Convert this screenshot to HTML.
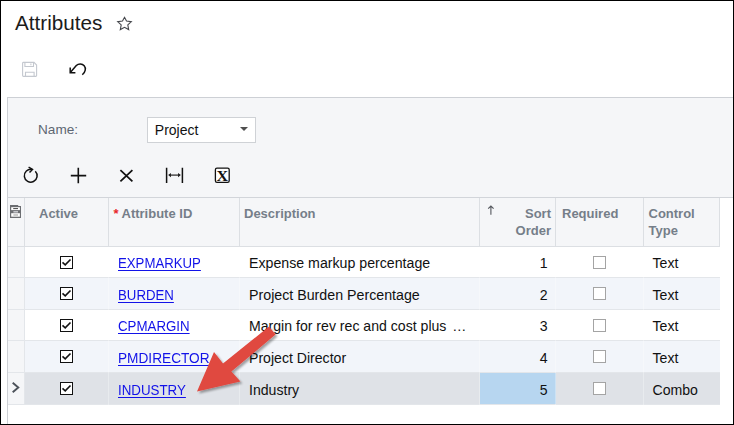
<!DOCTYPE html>
<html><head><meta charset="utf-8"><title>Attributes</title>
<style>
html,body{margin:0;padding:0}
body{width:734px;height:425px;position:relative;overflow:hidden;background:#fff;font-family:"Liberation Sans",Arial,sans-serif;color:#111}
.abs{position:absolute}
#frame{left:0;top:0;width:732px;height:423px;border:1px solid #000;z-index:50;pointer-events:none}
#title{left:15px;top:10.8px;font-size:20.7px;line-height:24px;color:#1b1b1b;white-space:nowrap}
#panel{left:7px;top:97px;width:730px;height:101px;background:#f5f6f8;border:1px solid #cdd0d5;box-sizing:border-box}
#gridwrap{left:7px;top:197px;width:730px;height:240px;background:#fff;border-left:1px solid #cdd0d5;border-top:1px solid #d2d5da;box-sizing:border-box}
#lbl{left:38px;top:122.3px;font-size:13.6px;line-height:16px;color:#5d6672}
#dd{left:147px;top:117px;width:109px;height:26px;box-sizing:border-box;border:1px solid #cfd2d6;background:#fff}
#dd span{position:absolute;left:6.8px;top:4px;font-size:14px;line-height:16px;color:#111}
#dd i{position:absolute;left:91.700px;top:8.900px;width:0;height:0;border-left:4.200px solid transparent;border-right:4.200px solid transparent;border-top:4.400px solid #4f4f4f}
.hd{position:absolute;top:198px;height:49px;background:#f5f6f8;border-right:1px solid #dcdfe3;border-bottom:1px solid #dcdfe3;box-sizing:border-box;font-weight:bold;font-size:13px;line-height:17px;color:#757e89}
.hd span{position:absolute;top:6.700px;white-space:nowrap}
.row{position:absolute;left:8px;width:712px;height:32px;box-sizing:border-box;border-bottom:1px solid #e3e6ea;font-size:14.1px;line-height:16px}
.row.alt{background:#f2f5fa}
.row.sel{background:#dfe2e7}
.row .s{position:absolute;left:0;top:0;width:17px;height:100%;background:#f5f6f8;border-right:1px solid #e3e6ea;box-sizing:border-box}
.row span{position:absolute;top:8.600px;white-space:nowrap}
.row a{position:absolute;top:8.600px;left:110px;font-size:14px;line-height:16px;color:#1212e8;text-decoration:underline;text-underline-offset:1.500px;text-decoration-thickness:1px;white-space:nowrap;transform:scaleX(.944);transform-origin:0 0}
.cb{position:absolute;left:52px;top:9px;width:13px;height:13px;box-sizing:border-box;border:1px solid #111;background:#fff}
.cb2{position:absolute;left:585px;top:9px;width:13px;height:13px;box-sizing:border-box;border:1px solid #a4a4a4;background:#fff}
.r1 .cb,.r1 .cb2{top:9px}
.r1 span,.r1 a{top:7.600px}
.r3 span,.r3 a{top:7.700px}
.vl{position:absolute;top:247px;width:1px;height:158px;background:rgba(255,255,255,.3)}
</style></head><body>
<div class="abs" id="title">Attributes</div>
<svg class="abs" style="left:116px;top:15px" width="17" height="16" viewBox="0 0 17 16"><path d="M8.500 2.300L10.500 6 15.300 6.600 11.800 9.900 12.700 14.600 8.500 12.300 4.300 14.600 5.200 9.900 1.700 6.600 6.500 6z" fill="none" stroke="#45474c" stroke-width="1.1" stroke-linejoin="miter"/></svg>
<!-- save -->
<svg class="abs" style="left:21px;top:60px" width="18" height="19" viewBox="21 60 18 19"><path d="M23.400 62.400H34L36.600 65V75.600a.8.8 0 0 1-.8.8H23.400a.8.8 0 0 1-.8-.8V63.200a.8.8 0 0 1 .8-.8z M24.900 62.400V66.500H33.500V62.400 M30.900 63.400V65.300 M25.500 76.400V72.300H34.100V76.400" fill="none" stroke="#c4c8cf" stroke-width="1.100"/></svg>
<!-- undo -->
<svg class="abs" style="left:67px;top:60px" width="21" height="19" viewBox="67 60 21 19"><path d="M70.500 72.300L76.300 65.600C78.500 63.300 82.200 63.300 84.200 65.700C86.200 68.100 85.600 71.900 82.300 74.800" fill="none" stroke="#111" stroke-width="1.500"/><path d="M70.200 67.500V72.700H75.400" fill="none" stroke="#111" stroke-width="1.500"/></svg>
<div class="abs" id="panel"></div>
<div class="abs" id="lbl">Name:</div>
<div class="abs" id="dd"><span>Project</span><i></i></div>
<!-- grid toolbar icons -->
<svg class="abs" style="left:22px;top:164px" width="18" height="21" viewBox="22 164 18 21"><path d="M35.3 171.3A6.400 6.400 0 1 1 32 169.500" fill="none" stroke="#111" stroke-width="1.5"/><path d="M28.600 167.100L32.500 169.400 29.500 172.500" fill="none" stroke="#111" stroke-width="1.5"/></svg>
<svg class="abs" style="left:70px;top:166px" width="18" height="19" viewBox="70 166 18 19"><path d="M78.300 167.800V183.200M70.800 175.600H86.200" fill="none" stroke="#111" stroke-width="1.6"/></svg>
<svg class="abs" style="left:118px;top:167px" width="17" height="17" viewBox="118 167 17 17"><path d="M120.400 170.100L132.400 181.300M132.400 170.100L120.400 181.300" fill="none" stroke="#111" stroke-width="1.750"/></svg>
<svg class="abs" style="left:164px;top:166px" width="21" height="19" viewBox="164 166 21 19"><path d="M166.600 167.800V183M182.400 167.800V183" fill="none" stroke="#111" stroke-width="1.500"/><path d="M169.500 175.100H179.500" fill="none" stroke="#333" stroke-width="1.300"/><path d="M168.100 175.100L171 172.900V177.300zM180.900 175.100L178 172.900V177.300z" fill="#222"/></svg>
<svg class="abs" style="left:213px;top:166px" width="19" height="19" viewBox="213 166 19 19"><rect x="215.400" y="168.100" width="13.800" height="14.300" rx="1.600" fill="#fff" stroke="#111" stroke-width="1.3"/><text x="222.400" y="180.900" text-anchor="middle" font-family="Liberation Serif,serif" font-weight="bold" font-size="13.600" transform="translate(222.400 0) scale(1.180 1) translate(-222.400 0)" fill="#111">X</text></svg>

<div class="abs" id="gridwrap"></div>
<!-- header -->
<div class="hd" style="left:8px;width:17px"></div>
<svg class="abs" style="left:9px;top:204px" width="14" height="16" viewBox="9 204 14 16"><path d="M10 205h8.200v1h2.800v12H10z" fill="#6c6e72"/><rect x="11.200" y="207.200" width="8.700" height="2.900" fill="#fff"/><rect x="13.200" y="208.100" width="4.800" height="1" fill="#444"/><rect x="13.400" y="211" width="4.600" height="1.600" fill="#c4c6ca"/><rect x="11.200" y="213.200" width="8.700" height="3.500" fill="#fff"/><rect x="13.400" y="214.500" width="4.600" height="1" fill="#999"/></svg>
<div class="hd" style="left:25px;width:84px"><span style="left:14px">Active</span></div>
<div class="hd" style="left:109px;width:131px"><span style="left:4.500px;color:#e8262a">*</span><span style="left:12.500px">Attribute ID</span></div>
<div class="hd" style="left:240px;width:240px"><span style="left:4px">Description</span></div>
<div class="hd" style="left:480px;width:76px"><svg style="position:absolute;left:7px;top:7px" width="8" height="10" viewBox="0 0 8 10"><path d="M3.900 1v8.800M1.200 3.700L3.900 1l2.700 2.700" fill="none" stroke="#55585e" stroke-width="1.100"/></svg><span style="right:4px;text-align:right">Sort<br>Order</span></div>
<div class="hd" style="left:556px;width:88px"><span style="left:6px">Required</span></div>
<div class="hd" style="left:644px;width:76px"><span style="left:4.500px">Control<br>Type</span></div>

<!-- rows -->
<div class="row r1" style="top:247px;height:31px"><div class="s"></div><div class="cb"><svg width="13" height="13" viewBox="0 0 13 13" style="position:absolute;left:-1px;top:-1px"><path d="M2.500 6.400L5.200 8.900 10.500 3.500" fill="none" stroke="#111" stroke-width="1.600"/></svg></div><a style="transform:scaleX(0.943)">EXPMARKUP</a><span style="left:241px;font-size:14.180px">Expense markup percentage</span><span style="right:172.500px">1</span><div class="cb2"></div><span style="left:644.500px">Text</span></div>
<div class="row alt" style="top:278px;height:32px"><div class="s"></div><div class="cb"><svg width="13" height="13" viewBox="0 0 13 13" style="position:absolute;left:-1px;top:-1px"><path d="M2.500 6.400L5.200 8.900 10.500 3.500" fill="none" stroke="#111" stroke-width="1.600"/></svg></div><a style="transform:scaleX(0.945)">BURDEN</a><span style="left:241px;font-size:14.220px">Project Burden Percentage</span><span style="right:172.500px">2</span><div class="cb2"></div><span style="left:644.500px">Text</span></div>
<div class="row r3" style="top:310px;height:31px"><div class="s"></div><div class="cb"><svg width="13" height="13" viewBox="0 0 13 13" style="position:absolute;left:-1px;top:-1px"><path d="M2.500 6.400L5.200 8.900 10.500 3.500" fill="none" stroke="#111" stroke-width="1.600"/></svg></div><a style="transform:scaleX(0.949)">CPMARGIN</a><span style="left:241px">Margin for rev rec and cost plus <i style="font-style:normal;margin-left:2px">…</i></span><span style="right:172.500px">3</span><div class="cb2"></div><span style="left:644.500px">Text</span></div>
<div class="row alt" style="top:341px;height:32px"><div class="s"></div><div class="cb"><svg width="13" height="13" viewBox="0 0 13 13" style="position:absolute;left:-1px;top:-1px"><path d="M2.500 6.400L5.200 8.900 10.500 3.500" fill="none" stroke="#111" stroke-width="1.600"/></svg></div><a style="transform:scaleX(0.976)">PMDIRECTOR</a><span style="left:241px">Project Director</span><span style="right:172.500px">4</span><div class="cb2"></div><span style="left:644.500px">Text</span></div>
<div class="row sel" style="top:373px;height:32px"><div class="s"></div><div class="abs" style="left:472px;top:0;width:76px;height:31px;background:#b7d6f0"></div><div class="cb"><svg width="13" height="13" viewBox="0 0 13 13" style="position:absolute;left:-1px;top:-1px"><path d="M2.500 6.400L5.200 8.900 10.500 3.500" fill="none" stroke="#111" stroke-width="1.600"/></svg></div><a style="transform:scaleX(0.952)">INDUSTRY</a><span style="left:241px">Industry</span><span style="right:172.500px">5</span><div class="cb2"></div><span style="left:644.500px">Combo</span></div>
<svg class="abs" style="left:10px;top:380px" width="12" height="15" viewBox="10 380 12 15"><path d="M12.700 382.700L18.300 387.500 12.700 392.300" fill="none" stroke="#4c525a" stroke-width="1.900"/></svg>

<div class="vl" style="left:108px"></div><div class="vl" style="left:239px"></div><div class="vl" style="left:479px"></div><div class="vl" style="left:555px"></div><div class="vl" style="left:643px"></div>
<!-- red arrow -->
<svg class="abs" style="left:180px;top:310px;z-index:20" width="120" height="100" viewBox="180 310 120 100"><defs><filter id="sh" x="-20%" y="-20%" width="150%" height="150%"><feGaussianBlur in="SourceAlpha" stdDeviation="1.300"/><feOffset dx="1.500" dy="1.500"/><feComponentTransfer><feFuncA type="linear" slope=".35"/></feComponentTransfer><feMerge><feMergeNode/><feMergeNode in="SourceGraphic"/></feMerge></filter></defs><path d="M197 391.600L214 352l9 11.400L269 326.600l6.500 8L231.400 371.600l9 9.800z" fill="#e0483f" filter="url(#sh)"/></svg>
<div class="abs" id="frame"></div>
</body></html>
